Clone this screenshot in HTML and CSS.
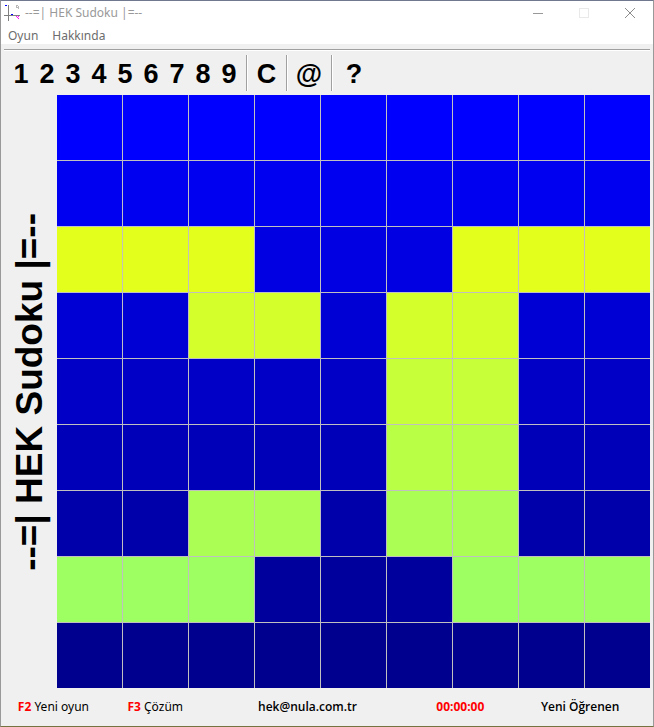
FILE: index.html
```html
<!DOCTYPE html>
<html lang="tr">
<head>
<meta charset="utf-8">
<title>--=| HEK Sudoku |=--</title>
<link rel="stylesheet" href="styles.css">
</head>
<body>
<div class="window">
  <header class="titlebar">
    <svg class="app-icon" width="16" height="16" viewBox="0 0 16 16" shape-rendering="crispEdges" aria-hidden="true">
      <path d="M4 0h1v16h-1zM0 10h16v1H0z" fill="#7f7f7f"/>
      <path d="M1 0h2v1H1zM7 9h2v1H7z" fill="#00f"/>
      <path d="M12 0h2v1h-2zM14 1h1v2h-1zM12 1h1v1h-1zM12 2h2v1h-2zM14 3h1v1h-1z" fill="#b8b8b8"/>
      <path d="M12 11h1v1h-1zM14 11h1v1h-1zM13 12h1v1h-1zM14 13h1v1h-1z" fill="#f0f"/>
    </svg>
    <h1 class="caption">--=| HEK Sudoku |=--</h1>
    <div class="controls">
      <button class="control" aria-label="Simge durumuna küçült"><svg width="10" height="10" shape-rendering="crispEdges"><path d="M0 5h10v1H0z" fill="#999"/></svg></button>
      <button class="control" aria-label="Ekranı kapla" disabled><svg width="10" height="10" shape-rendering="crispEdges"><rect x=".5" y=".5" width="9" height="9" fill="none" stroke="#e9e9e9"/></svg></button>
      <button class="control" aria-label="Kapat"><svg width="10" height="10"><path d="M0 0L10 10M10 0L0 10" stroke="#8c8c8c"/></svg></button>
    </div>
  </header>
  <nav class="menubar">
    <button class="menu">Oyun</button>
    <button class="menu">Hakkında</button>
  </nav>
  <div class="toolbar">
    <div class="group">
      <button class="tool">1</button><button class="tool">2</button><button class="tool">3</button>
      <button class="tool">4</button><button class="tool">5</button><button class="tool">6</button>
      <button class="tool">7</button><button class="tool">8</button><button class="tool">9</button>
    </div>
    <div class="group"><button class="tool">C</button></div>
    <div class="group"><button class="tool wide">@</button></div>
    <div class="group"><button class="tool wide">?</button></div>
  </div>
  <main class="content">
    <div class="side"><span class="side-title">--=| HEK Sudoku |=--</span></div>
    <div class="board">
      <div class="row r1"><i></i><i></i><i></i><i></i><i></i><i></i><i></i><i></i><i></i></div>
      <div class="row r2"><i></i><i></i><i></i><i></i><i></i><i></i><i></i><i></i><i></i></div>
      <div class="row r3"><i class="on"></i><i class="on"></i><i class="on"></i><i></i><i></i><i></i><i class="on"></i><i class="on"></i><i class="on"></i></div>
      <div class="row r4"><i></i><i></i><i class="on"></i><i class="on"></i><i></i><i class="on"></i><i class="on"></i><i></i><i></i></div>
      <div class="row r5"><i></i><i></i><i></i><i></i><i></i><i class="on"></i><i class="on"></i><i></i><i></i></div>
      <div class="row r6"><i></i><i></i><i></i><i></i><i></i><i class="on"></i><i class="on"></i><i></i><i></i></div>
      <div class="row r7"><i></i><i></i><i class="on"></i><i class="on"></i><i></i><i class="on"></i><i class="on"></i><i></i><i></i></div>
      <div class="row r8"><i class="on"></i><i class="on"></i><i class="on"></i><i></i><i></i><i></i><i class="on"></i><i class="on"></i><i class="on"></i></div>
      <div class="row r9"><i></i><i></i><i></i><i></i><i></i><i></i><i></i><i></i><i></i></div>
    </div>
  </main>
  <footer class="status">
    <span><b class="red">F2</b> Yeni oyun</span>
    <span><b class="red">F3</b> Çözüm</span>
    <b>hek@nula.com.tr</b>
    <b class="red">00:00:00</b>
    <b>Yeni Öğrenen</b>
  </footer>
</div>
</body>
</html>
```
FILE: styles.css
```css
* {
  box-sizing: border-box;
}

body {
  margin: 0;
  font: 12px/16px "Noto Sans", "Open Sans", sans-serif;
  color: #000;
  background: #f0f0f0;
}

button {
  padding: 0;
  border: 0;
  background: none;
  font: inherit;
  color: inherit;
}

.window {
  display: flex;
  flex-direction: column;
  min-height: 100vh;
  border: 1px solid #999;
  border-top-color: #70788f;
  border-bottom-color: #75733f;
  background: #f0f0f0;
}

.titlebar {
  display: flex;
  align-items: center;
  height: 24px;
  padding-left: 3px;
  background: #fff;
}

.caption {
  flex: 1;
  margin: 0 0 0 5px;
  font-size: 12px;
  font-weight: 400;
  color: #999;
}

.controls {
  display: flex;
}

.control {
  display: grid;
  place-items: center;
  width: 46px;
  height: 24px;
}

.menubar {
  display: flex;
  gap: 14px;
  height: 19px;
  padding: 2px 7px 0;
  background: #fff;
  color: #6d6d6d;
}

.toolbar {
  display: flex;
  height: 46px;
  margin: 5px 3px 0;
  padding: 5px 0 4px 4px;
  border-top: 1px solid #a0a0a0;
  box-shadow: inset 0 1px #fff;
  font: bold 27px/38px "Liberation Sans", Arial, sans-serif;
}

.group {
  display: flex;
  padding: 0 4px 0 0;
}

.group + .group {
  padding: 0 4px;
  border-left: 1px solid #a0a0a0;
  box-shadow: inset 1px 0 #fff;
}

.tool {
  min-width: 26px;
}

.group + .group .tool {
  min-width: 31px;
}

.group + .group .wide {
  min-width: 36px;
}

.content {
  display: flex;
  padding-right: 3px;
}

.side {
  display: grid;
  place-items: center;
  width: 56px;
}

.side-title {
  writing-mode: vertical-rl;
  transform: rotate(180deg);
  white-space: nowrap;
  font: bold 37px/54px "Liberation Sans", Arial, sans-serif;
  margin-left: 2px;
}

.board {
  display: grid;
  flex: 1;
  grid-template-rows: repeat(9, 1fr);
  gap: 1px;
  aspect-ratio: 1;
  background: #c0c0c0;
}

.row {
  display: grid;
  grid-template-columns: repeat(9, 1fr);
  gap: 1px;
}

.row i {
  background: var(--off);
}

.row .on {
  background: var(--on);
}

.r1 { --off: #0000ff; }
.r2 { --off: #0000f1; }
.r3 { --off: #0000e3; --on: #e3ff1c; }
.r4 { --off: #0000d5; --on: #d5ff2a; }
.r5 { --off: #0000c7; --on: #c7ff38; }
.r6 { --off: #0000b9; --on: #b9ff46; }
.r7 { --off: #0000ab; --on: #abff54; }
.r8 { --off: #00009d; --on: #9dff62; }
.r9 { --off: #00008f; }

.status {
  display: grid;
  grid-template-columns: 105fr 99fr 206fr 100fr 140fr;
  flex: 1;
  align-items: center;
  padding-right: 3px;
  text-align: center;
}

.status b {
  font-family: "Open Sans", "Noto Sans", sans-serif;
  font-weight: 700;
}

.status > b:not(.red) {
  font-weight: 600;
}

.red {
  color: #f00;
}
```
